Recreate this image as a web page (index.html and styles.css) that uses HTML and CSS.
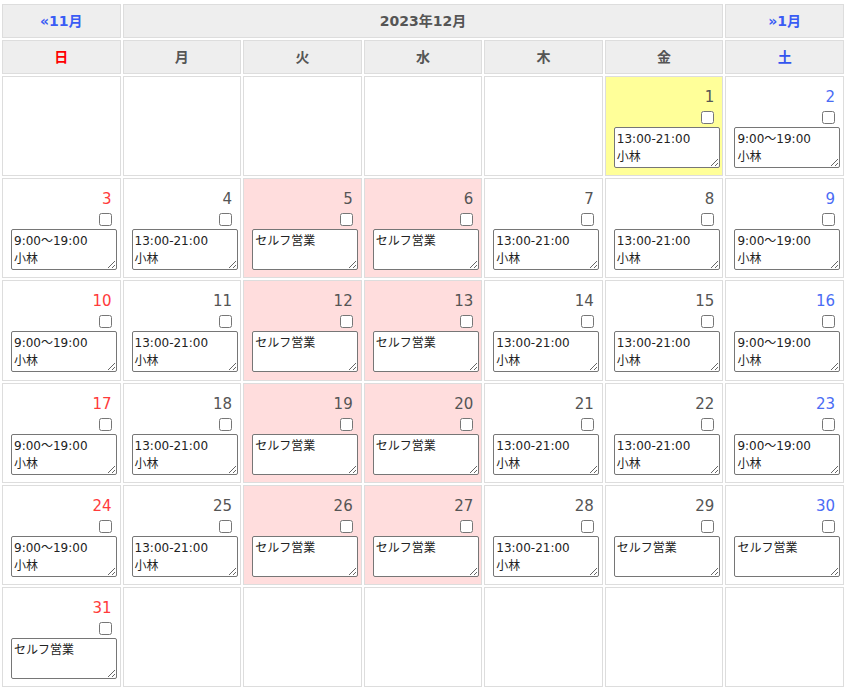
FILE: index.html
```html
<!DOCTYPE html>
<html lang="ja">
<head>
<meta charset="utf-8">
<title>2023年12月</title>
<link rel="stylesheet" href="styles.css">
</head>
<body>
<table class="cal">
  <thead>
    <tr class="nav">
      <th><a class="navlink" href="#">«11月</a></th>
      <th colspan="5" class="title">2023年12月</th>
      <th><a class="navlink" href="#">»1月</a></th>
    </tr>
    <tr class="wk">
      <th class="h-sun">日</th><th>月</th><th>火</th><th>水</th><th>木</th><th>金</th><th class="h-sat">土</th>
    </tr>
  </thead>
  <tbody>
    <tr>
      <td></td><td></td><td></td><td></td><td></td>
      <td class="today"><div class="cell"><span class="num">1</span><input type="checkbox" class="chk"><textarea class="memo">13:00-21:00
小林</textarea></div></td>
      <td class="sat"><div class="cell"><span class="num">2</span><input type="checkbox" class="chk"><textarea class="memo">9:00～19:00
小林</textarea></div></td>
    </tr>
    <tr>
      <td class="sun"><div class="cell"><span class="num">3</span><input type="checkbox" class="chk"><textarea class="memo">9:00～19:00
小林</textarea></div></td>
      <td><div class="cell"><span class="num">4</span><input type="checkbox" class="chk"><textarea class="memo">13:00-21:00
小林</textarea></div></td>
      <td class="self"><div class="cell"><span class="num">5</span><input type="checkbox" class="chk"><textarea class="memo">セルフ営業</textarea></div></td>
      <td class="self"><div class="cell"><span class="num">6</span><input type="checkbox" class="chk"><textarea class="memo">セルフ営業</textarea></div></td>
      <td><div class="cell"><span class="num">7</span><input type="checkbox" class="chk"><textarea class="memo">13:00-21:00
小林</textarea></div></td>
      <td><div class="cell"><span class="num">8</span><input type="checkbox" class="chk"><textarea class="memo">13:00-21:00
小林</textarea></div></td>
      <td class="sat"><div class="cell"><span class="num">9</span><input type="checkbox" class="chk"><textarea class="memo">9:00～19:00
小林</textarea></div></td>
    </tr>
    <tr>
      <td class="sun"><div class="cell"><span class="num">10</span><input type="checkbox" class="chk"><textarea class="memo">9:00～19:00
小林</textarea></div></td>
      <td><div class="cell"><span class="num">11</span><input type="checkbox" class="chk"><textarea class="memo">13:00-21:00
小林</textarea></div></td>
      <td class="self"><div class="cell"><span class="num">12</span><input type="checkbox" class="chk"><textarea class="memo">セルフ営業</textarea></div></td>
      <td class="self"><div class="cell"><span class="num">13</span><input type="checkbox" class="chk"><textarea class="memo">セルフ営業</textarea></div></td>
      <td><div class="cell"><span class="num">14</span><input type="checkbox" class="chk"><textarea class="memo">13:00-21:00
小林</textarea></div></td>
      <td><div class="cell"><span class="num">15</span><input type="checkbox" class="chk"><textarea class="memo">13:00-21:00
小林</textarea></div></td>
      <td class="sat"><div class="cell"><span class="num">16</span><input type="checkbox" class="chk"><textarea class="memo">9:00～19:00
小林</textarea></div></td>
    </tr>
    <tr>
      <td class="sun"><div class="cell"><span class="num">17</span><input type="checkbox" class="chk"><textarea class="memo">9:00～19:00
小林</textarea></div></td>
      <td><div class="cell"><span class="num">18</span><input type="checkbox" class="chk"><textarea class="memo">13:00-21:00
小林</textarea></div></td>
      <td class="self"><div class="cell"><span class="num">19</span><input type="checkbox" class="chk"><textarea class="memo">セルフ営業</textarea></div></td>
      <td class="self"><div class="cell"><span class="num">20</span><input type="checkbox" class="chk"><textarea class="memo">セルフ営業</textarea></div></td>
      <td><div class="cell"><span class="num">21</span><input type="checkbox" class="chk"><textarea class="memo">13:00-21:00
小林</textarea></div></td>
      <td><div class="cell"><span class="num">22</span><input type="checkbox" class="chk"><textarea class="memo">13:00-21:00
小林</textarea></div></td>
      <td class="sat"><div class="cell"><span class="num">23</span><input type="checkbox" class="chk"><textarea class="memo">9:00～19:00
小林</textarea></div></td>
    </tr>
    <tr>
      <td class="sun"><div class="cell"><span class="num">24</span><input type="checkbox" class="chk"><textarea class="memo">9:00～19:00
小林</textarea></div></td>
      <td><div class="cell"><span class="num">25</span><input type="checkbox" class="chk"><textarea class="memo">13:00-21:00
小林</textarea></div></td>
      <td class="self"><div class="cell"><span class="num">26</span><input type="checkbox" class="chk"><textarea class="memo">セルフ営業</textarea></div></td>
      <td class="self"><div class="cell"><span class="num">27</span><input type="checkbox" class="chk"><textarea class="memo">セルフ営業</textarea></div></td>
      <td><div class="cell"><span class="num">28</span><input type="checkbox" class="chk"><textarea class="memo">13:00-21:00
小林</textarea></div></td>
      <td><div class="cell"><span class="num">29</span><input type="checkbox" class="chk"><textarea class="memo">セルフ営業</textarea></div></td>
      <td class="sat"><div class="cell"><span class="num">30</span><input type="checkbox" class="chk"><textarea class="memo">セルフ営業</textarea></div></td>
    </tr>
    <tr>
      <td class="sun"><div class="cell"><span class="num">31</span><input type="checkbox" class="chk"><textarea class="memo">セルフ営業</textarea></div></td>
      <td></td><td></td><td></td><td></td><td></td><td></td>
    </tr>
  </tbody>
</table>
</body>
</html>
```
FILE: styles.css
```css
body {
  margin: 0;
  background: #fff;
  font-family: "DejaVu Sans", "Noto Sans CJK JP", sans-serif;
}

.cal {
  width: 846px;
  margin-top: 2px;
  border-collapse: separate;
  border-spacing: 2px;
  table-layout: fixed;
}

.cal th,
.cal td {
  border: 1px solid #dddddd;
  padding: 0;
}

.cal th {
  background: #eeeeee;
  color: #555555;
  font-size: 14px;
  font-weight: bold;
  line-height: 32px;
  text-align: center;
}

.cal th.h-sun { color: #ff0000; }
.cal th.h-sat { color: #3355ee; }

.navlink {
  color: #3a5cf5;
  text-decoration: none;
}

.cal td {
  vertical-align: top;
  background: #fff;
}

.cal td.self { background: #ffdddd; }
.cal td.today { background: #ffff99; }

.cell {
  height: 98.2px;
  box-sizing: border-box;
  padding-top: 11px;
  display: flex;
  flex-direction: column;
  align-items: flex-end;
}

.num {
  font-size: 15px;
  line-height: 18px;
  color: #555555;
  margin-right: 8px;
}

.sun .num { color: #ff3b3b; }
.sat .num { color: #4a6cf5; }

.chk {
  width: 13px;
  height: 13px;
  margin: 5px 8px 0 0;
}

.memo {
  align-self: flex-start;
  margin: 3px 0 0 8px;
  width: 106px;
  height: 41px;
  box-sizing: border-box;
  padding: 2px;
  border: 1px solid #767676;
  border-radius: 2px;
  background: #fff;
  color: #222;
  font-family: "DejaVu Sans", "Noto Sans CJK JP", sans-serif;
  font-size: 12px;
  line-height: 18px;
  overflow: hidden;
  resize: both;
}
```
